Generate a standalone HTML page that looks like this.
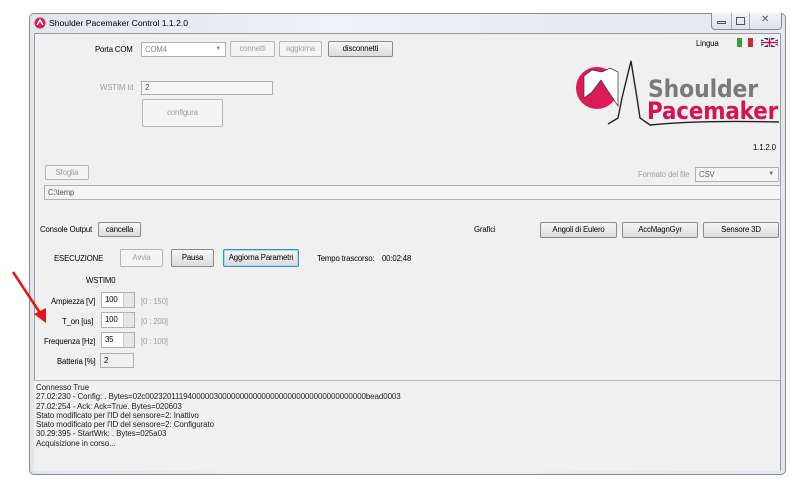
<!DOCTYPE html>
<html><head><meta charset="utf-8"><style>
*{margin:0;padding:0;box-sizing:border-box}
body{width:793px;height:493px;background:#fff;position:relative;overflow:hidden;font-family:"Liberation Sans",sans-serif;font-size:7.8px;letter-spacing:-0.15px;color:#000}
.a{position:absolute;white-space:nowrap}
.btn{position:absolute;border:1px solid #8a8a8a;border-radius:2px;background:linear-gradient(#f6f6f6,#dcdcdc);text-align:center;font-size:7.8px}
.dis{border-color:#b5b5b5;background:#f4f4f4;color:#a0a0a0}
.tb{position:absolute;border:1px solid #b0b0b0;background:#fff;padding-left:3px;font-size:7.8px}
.g{color:#a0a0a0}
</style></head><body>
<div class="a" style="left:29px;top:13px;width:757px;height:462px;border:1px solid #8c8c8c;border-radius:5px;background:linear-gradient(90deg,#dfe6ee,#eef2f6 40%,#e2e8ef)"></div>
<div class="a" style="left:34px;top:33px;width:747px;height:438px;background:#f0f0f0;border:1px solid #9a9a9a"></div>
<svg class="a" style="left:34px;top:16px" width="12" height="13"><circle cx="6" cy="7" r="5.5" fill="#d8174d"/><path d="M3 9 L6 4 L9 9" stroke="#fff" stroke-width="1.5" fill="none"/></svg>
<div class="a" style="left:49px;top:18px;font-size:8.6px;letter-spacing:0">Shoulder Pacemaker Control 1.1.2.0</div>
<div class="a" style="left:711px;top:13px;width:71px;height:17px;border:1px solid #8c8c8c;border-top:none;border-radius:0 0 4px 4px;background:linear-gradient(#f2f4f7,#dde3ea)"></div>
<div class="a" style="left:731px;top:13px;width:1px;height:16px;background:#aaa"></div>
<div class="a" style="left:749px;top:13px;width:1px;height:16px;background:#aaa"></div>
<div class="a" style="left:717px;top:21px;width:9px;height:3px;border:1px solid #555"></div>
<div class="a" style="left:736px;top:17px;width:9px;height:8px;border:1px solid #555"></div>
<div class="a" style="left:761px;top:14px;font-size:10px;color:#555">✕</div>

<div class="a" style="left:95px;top:45px">Porta COM</div>
<div class="tb" style="left:141px;top:42px;width:85px;height:15px;color:#888;line-height:13px">COM4<span style="position:absolute;right:4px;font-size:6px">▼</span></div>
<div class="btn dis" style="left:230px;top:41px;width:45px;height:16px;line-height:14px">connetti</div>
<div class="btn dis" style="left:279px;top:41px;width:43px;height:16px;line-height:14px">aggiorna</div>
<div class="btn" style="left:328px;top:41px;width:65px;height:16px;line-height:14px">disconnetti</div>
<div class="a g" style="left:100px;top:83px">WSTIM Id</div>
<div class="tb" style="left:141px;top:81px;width:132px;height:14px;background:#f4f4f4;color:#555;line-height:12px">2</div>
<div class="btn dis" style="left:142px;top:99px;width:81px;height:28px;line-height:26px">configura</div>

<div class="a" style="left:696px;top:39px">Lingua</div>
<div class="a" style="left:737px;top:38px;width:5px;height:9px;background:#3c9a3c"></div>
<div class="a" style="left:748px;top:38px;width:5px;height:9px;background:#c03030"></div>
<svg class="a" style="left:761px;top:38px" width="17" height="9"><rect width="17" height="9" fill="#2a3f8f"/><path d="M0 0L17 9M17 0L0 9" stroke="#fff" stroke-width="2"/><path d="M8.5 0V9M0 4.5H17" stroke="#fff" stroke-width="3"/><path d="M8.5 0V9M0 4.5H17" stroke="#c8102e" stroke-width="1.5"/></svg>

<svg class="a" style="left:570px;top:58px" width="212" height="72">
<circle cx="27" cy="30" r="21" fill="#dc1a55"/>
<path d="M14 18 L22 12 L32 14 L40 10 L48 14 L48 48 L36 30 L31 22 L22 34 L14 40 Z" fill="#fff" stroke="#333" stroke-width="0.7"/>
<path d="M38 66 L48 60 L52 40 L61 3 L67 40 L70 60 L80 67 Q130 62 209 64" fill="none" stroke="#222" stroke-width="1.4"/>
<text x="78" y="39" font-family="DejaVu Sans,sans-serif" font-weight="bold" font-size="24" fill="#7a7a7a" textLength="110" lengthAdjust="spacingAndGlyphs">Shoulder</text>
<text x="77" y="61" font-family="DejaVu Sans,sans-serif" font-weight="bold" font-size="24" fill="#d6134f" textLength="131" lengthAdjust="spacingAndGlyphs">Pacemaker</text>
</svg>
<div class="a" style="left:753px;top:143px">1.1.2.0</div>
<div class="a g" style="left:638px;top:170px">Formato del file</div>
<div class="tb" style="left:695px;top:167px;width:84px;height:15px;background:#f4f4f4;color:#666;line-height:13px">CSV<span style="position:absolute;right:4px;font-size:6px">▼</span></div>
<div class="btn dis" style="left:45px;top:165px;width:44px;height:15px;line-height:13px">Sfoglia</div>
<div class="tb" style="left:44px;top:185px;width:737px;height:15px;background:#f4f4f4;color:#555;line-height:13px">C:\temp</div>

<div class="a" style="left:40px;top:225px">Console Output</div>
<div class="btn" style="left:98px;top:222px;width:43px;height:15px;line-height:13px">cancella</div>
<div class="a" style="left:474px;top:225px">Grafici</div>
<div class="btn" style="left:540px;top:222px;width:77px;height:16px;line-height:14px">Angoli di Eulero</div>
<div class="btn" style="left:622px;top:222px;width:76px;height:16px;line-height:14px">AccMagnGyr</div>
<div class="btn" style="left:703px;top:222px;width:76px;height:16px;line-height:14px">Sensore 3D</div>

<div class="a" style="left:54px;top:254px">ESECUZIONE</div>
<div class="btn dis" style="left:120px;top:249px;width:43px;height:18px;line-height:16px">Avvia</div>
<div class="btn" style="left:171px;top:249px;width:43px;height:18px;line-height:16px">Pausa</div>
<div class="btn" style="left:223px;top:249px;width:76px;height:18px;line-height:16px;border-color:#3c8fc8;box-shadow:inset 0 0 0 1px #a8daf5">Aggiorna Parametri</div>
<div class="a" style="left:317px;top:254px">Tempo trascorso:</div>
<div class="a" style="left:382px;top:254px">00:02:48</div>
<div class="a" style="left:86px;top:276px">WSTIM0</div>

<div class="a" style="left:51px;top:297px">Ampiezza [V]</div>
<div class="a" style="left:62px;top:317px">T_on [us]</div>
<div class="a" style="left:44px;top:337px">Frequenza [Hz]</div>
<div class="a" style="left:57px;top:357px">Batteria [%]</div>
<div class="tb" style="left:101px;top:292px;width:34px;height:16px;line-height:14px">100</div>
<div class="tb" style="left:101px;top:312px;width:34px;height:16px;line-height:14px">100</div>
<div class="tb" style="left:101px;top:332px;width:34px;height:16px;line-height:14px">35</div>
<div class="tb" style="left:100px;top:353px;width:34px;height:15px;background:#f0f0f0;line-height:13px">2</div>
<div class="a" style="left:123px;top:293px;width:11px;height:14px;background:#e6e6e6;border-left:1px solid #ccc"></div>
<div class="a" style="left:123px;top:313px;width:11px;height:14px;background:#e6e6e6;border-left:1px solid #ccc"></div>
<div class="a" style="left:123px;top:333px;width:11px;height:14px;background:#e6e6e6;border-left:1px solid #ccc"></div>
<div class="a g" style="left:141px;top:297px">[0 : 150]</div>
<div class="a g" style="left:141px;top:317px">[0 : 200]</div>
<div class="a g" style="left:141px;top:337px">[0 : 100]</div>
<svg class="a" style="left:8px;top:268px" width="45" height="60"><path d="M5 4 L34 48" stroke="#e0161a" stroke-width="2.5"/><path d="M26 46 L38 55 L38 40 Z" fill="#e0161a"/></svg>

<div class="a" style="left:34px;top:380px;width:746px;height:91px;border-top:1px solid #b8b8b8;background:#f0f0f0"></div>
<div class="a" style="left:36px;top:383px;font-size:8px;letter-spacing:-0.1px;line-height:9.3px;color:#222">Connesso True<br>27.02:230 - Config: . Bytes=02c002320111940000030000000000000000000000000000000000bead0003<br>27.02:254 - Ack: Ack=True. Bytes=020603<br>Stato modificato per l'ID del sensore=2: Inattivo<br>Stato modificato per l'ID del sensore=2: Configurato<br>30.29:395 - StartWrk: . Bytes=025a03<br>Acquisizione in corso...</div>
</body></html>
